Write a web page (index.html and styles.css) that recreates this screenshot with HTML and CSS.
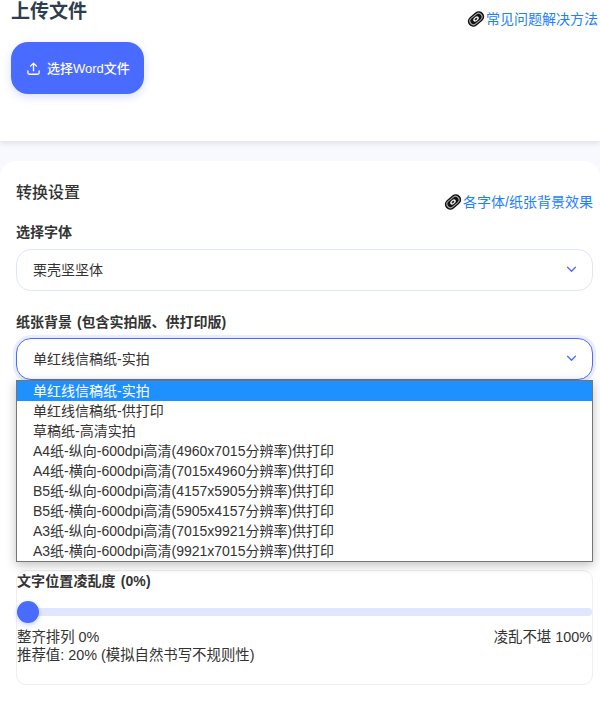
FILE: index.html
```html
<!DOCTYPE html>
<html lang="zh-CN">
<head>
<meta charset="utf-8">
<title>上传文件</title>
<link rel="stylesheet" href="styles.css">
</head>
<body>
<section class="upload">
  <div class="head upload-head">
    <h2 class="upload-title">上传文件</h2>
    <a class="link" href="#"><svg class="clip" viewBox="0 0 18 18"><g transform="rotate(-40 9 9)"><rect x="0" y="3.6" width="18" height="10.8" rx="5.4" fill="#111"/><rect x="1.6" y="5" width="14.8" height="8" rx="4" fill="#aaa"/><rect x="2.8" y="5.9" width="12.4" height="6.2" rx="3.1" fill="#111"/><ellipse cx="9" cy="9" rx="3.2" ry="2" fill="#eee"/><ellipse cx="9" cy="9" rx="1.5" ry="0.9" fill="#222"/></g></svg>常见问题解决方法</a>
  </div>
  <button class="upload-btn"><svg class="up" viewBox="0 0 16 16" fill="none" stroke="#fff" stroke-width="1.4" stroke-linecap="round" stroke-linejoin="round"><path d="M8 10.5V2.5M4.8 5.5 8 2.3l3.2 3.2M2 10.5v2a1.6 1.6 0 0 0 1.6 1.6h8.8a1.6 1.6 0 0 0 1.6-1.6v-2"/></svg>选择Word文件</button>
</section>
<main class="settings">
  <div class="head settings-head">
    <h3 class="settings-title">转换设置</h3>
    <a class="link" href="#"><svg class="clip" viewBox="0 0 18 18"><g transform="rotate(-40 9 9)"><rect x="0" y="3.6" width="18" height="10.8" rx="5.4" fill="#111"/><rect x="1.6" y="5" width="14.8" height="8" rx="4" fill="#aaa"/><rect x="2.8" y="5.9" width="12.4" height="6.2" rx="3.1" fill="#111"/><ellipse cx="9" cy="9" rx="3.2" ry="2" fill="#eee"/><ellipse cx="9" cy="9" rx="1.5" ry="0.9" fill="#222"/></g></svg>各字体/纸张背景效果</a>
  </div>
  <div class="label label-font">选择字体</div>
  <div class="select">栗壳坚坚体<svg class="chev" viewBox="0 0 12 8" fill="none" stroke="#4a6bff" stroke-width="1.5" stroke-linecap="round" stroke-linejoin="round"><path d="M1.5 1.5 6 6l4.5-4.5"/></svg></div>
  <div class="label label-paper">纸张背景 (包含实拍版、供打印版)</div>
  <div class="select-wrap">
    <div class="select select-open">单红线信稿纸-实拍<svg class="chev" viewBox="0 0 12 8" fill="none" stroke="#4a6bff" stroke-width="1.5" stroke-linecap="round" stroke-linejoin="round"><path d="M1.5 1.5 6 6l4.5-4.5"/></svg></div>
    <ul class="options">
      <li class="option active">单红线信稿纸-实拍</li>
      <li class="option">单红线信稿纸-供打印</li>
      <li class="option">草稿纸-高清实拍</li>
      <li class="option">A4纸-纵向-600dpi高清(4960x7015分辨率)供打印</li>
      <li class="option">A4纸-横向-600dpi高清(7015x4960分辨率)供打印</li>
      <li class="option">B5纸-纵向-600dpi高清(4157x5905分辨率)供打印</li>
      <li class="option">B5纸-横向-600dpi高清(5905x4157分辨率)供打印</li>
      <li class="option">A3纸-纵向-600dpi高清(7015x9921分辨率)供打印</li>
      <li class="option">A3纸-横向-600dpi高清(9921x7015分辨率)供打印</li>
    </ul>
  </div>
  <div class="panel">
    <div class="panel-label">文字位置凌乱度 (0%)</div>
    <div class="slider"><span class="thumb"></span></div>
    <div class="scale"><span>整齐排列 0%</span><span>凌乱不堪 100%</span></div>
    <div class="hint">推荐值: 20% (模拟自然书写不规则性)</div>
  </div>
</main>
</body>
</html>
```
FILE: styles.css
```css
* { box-sizing: border-box; }
html, body { margin: 0; padding: 0; }
body {
  width: 600px;
  height: 714px;
  overflow: hidden;
  background: #f8f9ff;
  font-family: "Liberation Sans", "Noto Sans CJK SC", sans-serif;
  font-size: 14px;
  color: #333;
}
.upload {
  height: 141px;
  padding: 0 2px 0 11px;
  background: #fff;
  box-shadow: 0 2px 6px rgba(0, 0, 0, 0.1);
  position: relative;
}
.head { display: flex; justify-content: space-between; align-items: flex-start; }
.upload-head { height: 42px; }
.upload-title { margin: 0; font-size: 19px; line-height: 24px; font-weight: 700; color: #2c3e50; }
.link { display: flex; align-items: center; color: #1e80ff; text-decoration: none; font-size: 14px; line-height: 20px; margin-top: 9px; }
.clip { width: 18px; height: 18px; margin-right: 1px; }
.upload-btn {
  display: flex;
  align-items: center;
  width: 133px;
  height: 52px;
  padding: 0 0 2px 15px;
  border: 0;
  border-radius: 17px;
  background: #4a6bff;
  color: #fff;
  font: inherit;
  font-size: 13px;
  font-weight: 500;
  box-shadow: 0 3px 8px rgba(74, 107, 255, 0.22);
}
.up { width: 15px; height: 15px; margin-right: 6px; margin-top: 2px; }
.settings {
  margin-top: 20px;
  height: 553px;
  padding: 0 7px 0 16px;
  background: #fff;
  border-radius: 16px 16px 0 0;
}
.settings-head { height: 62px; padding-top: 21px; }
.settings-title { margin: 0; font-size: 16px; line-height: 22px; font-weight: 500; color: #333; }
.settings-head .link { margin-top: 10px; }
.label { font-size: 14px; line-height: 18px; font-weight: 700; color: #333; word-spacing: 1px; }
.label-font { height: 26px; }
.label-paper { margin-top: 22px; height: 25px; }
.select {
  display: flex;
  align-items: center;
  justify-content: space-between;
  height: 42px;
  padding: 0 15px 2px 16px;
  background: #fff;
  border: 1px solid #e0e5ff;
  border-radius: 15px;
}
.select-wrap { position: relative; }
.select-open { border-color: #4a6bff; box-shadow: 0 0 0 3px rgba(74, 107, 255, 0.12); }
.chev { width: 11px; height: 7px; }
.options {
  position: absolute;
  left: 0;
  right: 0;
  top: 42px;
  margin: 0;
  padding: 0;
  list-style: none;
  background: #fff;
  border: 1px solid #767676;
  box-shadow: 0 3px 10px rgba(0, 0, 0, 0.25);
  z-index: 2;
}
.option { height: 20px; line-height: 20px; padding-left: 16px; white-space: nowrap; }
.active { background: #1e90ff; color: #fff; }
.panel {
  margin-top: 190px;
  height: 115px;
  border: 1px solid #eee;
  border-radius: 10px;
  color: #333;
  font-size: 14.4px;
}
.panel-label { font-size: 14px; line-height: 20px; font-weight: 700; word-spacing: 1px; letter-spacing: 0.1px; }
.slider { position: relative; height: 8px; margin-top: 17px; background: #e0e6ff; border-radius: 4px; }
.thumb {
  position: absolute;
  left: 0;
  top: -7px;
  width: 22px;
  height: 22px;
  border-radius: 50%;
  background: #4a6bff;
  box-shadow: 0 2px 5px rgba(74, 107, 255, 0.3);
}
.scale { display: flex; justify-content: space-between; margin-top: 12px; line-height: 18px; }
.hint { line-height: 19px; }
```
